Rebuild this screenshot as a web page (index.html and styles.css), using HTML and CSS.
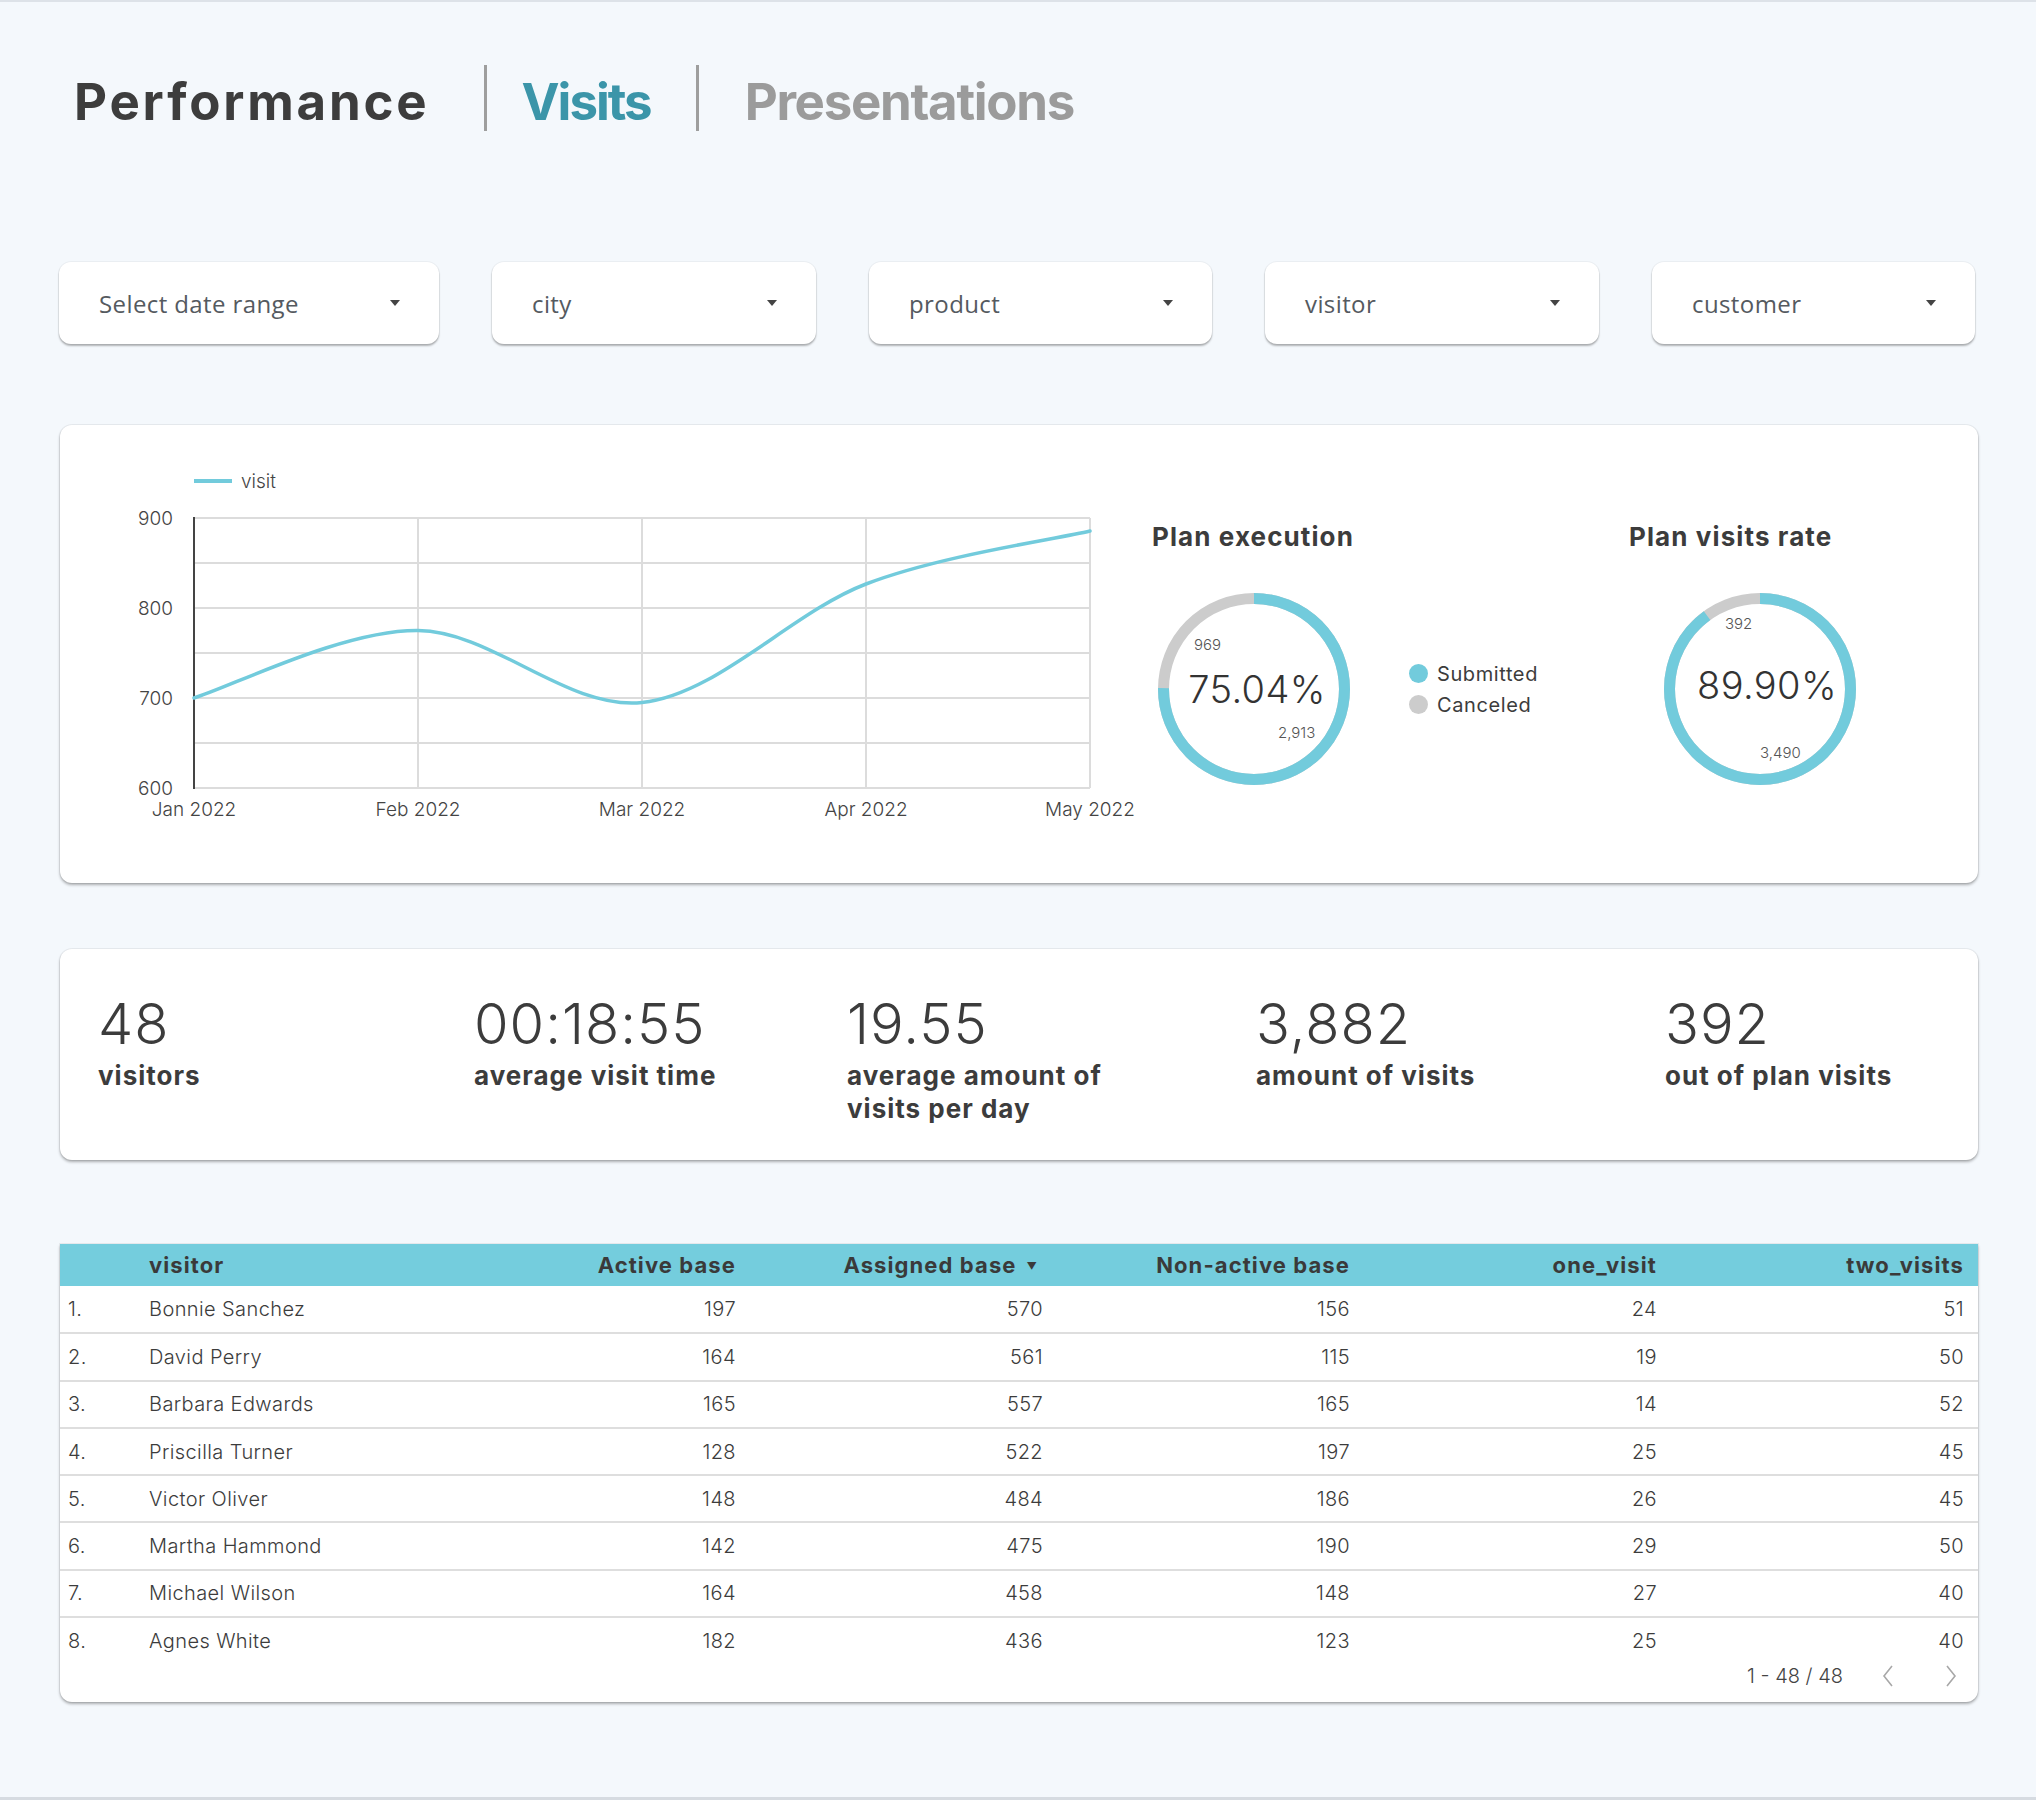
FILE: index.html
```html
<!DOCTYPE html>
<html lang="en">
<head>
<meta charset="utf-8">
<title>Performance – Visits</title>
<link rel="stylesheet" href="styles.css">
</head>
<body>
<div class="page">
  <header class="tabs">
    <h1 class="tab tab-main">Performance</h1>
    <span class="pipe pipe-1"></span>
    <span class="tab tab-active">Visits</span>
    <span class="pipe pipe-2"></span>
    <span class="tab tab-muted">Presentations</span>
  </header>

  <div class="filters">
    <div class="filter"><span>Select date range</span><i class="caret"></i></div>
    <div class="filter"><span>city</span><i class="caret"></i></div>
    <div class="filter"><span>product</span><i class="caret"></i></div>
    <div class="filter"><span>visitor</span><i class="caret"></i></div>
    <div class="filter"><span>customer</span><i class="caret"></i></div>
  </div>

  <section class="card chart-card">
    <svg class="line-chart" width="1080" height="420" viewBox="0 0 1080 420">
      <line x1="134" y1="56" x2="172" y2="56" class="legend-line"/>
      <text x="181" y="56" class="legend-text">visit</text>
      <g class="grid">
        <line x1="134" y1="93" x2="1030" y2="93"/>
        <line x1="134" y1="138" x2="1030" y2="138"/>
        <line x1="134" y1="183" x2="1030" y2="183"/>
        <line x1="134" y1="228" x2="1030" y2="228"/>
        <line x1="134" y1="273" x2="1030" y2="273"/>
        <line x1="134" y1="318" x2="1030" y2="318"/>
        <line x1="134" y1="363" x2="1030" y2="363"/>
        <line x1="358" y1="93" x2="358" y2="363"/>
        <line x1="582" y1="93" x2="582" y2="363"/>
        <line x1="806" y1="93" x2="806" y2="363"/>
        <line x1="1030" y1="93" x2="1030" y2="363"/>
      </g>
      <line x1="134" y1="92" x2="134" y2="364" class="axis"/>
      <g class="ylabels">
        <text x="113" y="93">900</text>
        <text x="113" y="183">800</text>
        <text x="113" y="273">700</text>
        <text x="113" y="363">600</text>
      </g>
      <g class="xlabels">
        <text x="134" y="384">Jan 2022</text>
        <text x="358" y="384">Feb 2022</text>
        <text x="582" y="384">Mar 2022</text>
        <text x="806" y="384">Apr 2022</text>
        <text x="1030" y="384">May 2022</text>
      </g>
      <path class="series" d="M134,273 C171.3,261.75 283.3,204.75 358,205.5 C432.7,206.25 507.3,285.25 582,277.5 C656.7,269.75 731.3,187.6 806,159 C880.7,130.4 992.7,114.8 1030,106"/>
    </svg>

    <div class="gauge gauge-exec">
      <h2 class="gauge-title">Plan execution</h2>
      <div class="gauge-row">
        <svg class="donut" width="204" height="204" viewBox="0 0 204 204">
          <circle cx="102" cy="102" r="90.5" class="ring-bg"/>
          <circle cx="102" cy="102" r="90.5" class="ring-fg" stroke-dasharray="426.7 568.6" transform="rotate(-90 102 102)"/>
          <text x="105" y="102" class="donut-value">75.04%</text>
          <text x="42" y="57" class="donut-label">969</text>
          <text x="126" y="145" class="donut-label">2,913</text>
        </svg>
        <ul class="legend">
          <li><span class="dot dot-teal"></span>Submitted</li>
          <li><span class="dot dot-gray"></span>Canceled</li>
        </ul>
      </div>
    </div>

    <div class="gauge gauge-rate">
      <h2 class="gauge-title">Plan visits rate</h2>
      <svg class="donut donut-rate" width="204" height="204" viewBox="0 0 204 204">
        <circle cx="102" cy="102" r="90.5" class="ring-bg"/>
        <circle cx="102" cy="102" r="90.5" class="ring-fg" stroke-dasharray="511.2 568.6" transform="rotate(-90 102 102)"/>
        <text x="109" y="98" class="donut-value">89.90%</text>
        <text x="67" y="36" class="donut-label">392</text>
        <text x="102" y="165" class="donut-label">3,490</text>
      </svg>
    </div>
  </section>

  <section class="card kpis">
    <div class="kpi kpi-1"><div class="kpi-value">48</div><div class="kpi-label">visitors</div></div>
    <div class="kpi kpi-2"><div class="kpi-value">00:18:55</div><div class="kpi-label">average visit time</div></div>
    <div class="kpi kpi-3"><div class="kpi-value">19.55</div><div class="kpi-label">average amount of<br>visits per day</div></div>
    <div class="kpi kpi-4"><div class="kpi-value">3,882</div><div class="kpi-label">amount of visits</div></div>
    <div class="kpi kpi-5"><div class="kpi-value">392</div><div class="kpi-label">out of plan visits</div></div>
  </section>

  <section class="card table-card">
    <table class="data">
      <colgroup>
        <col class="c-num"><col class="c-name"><col class="c-val"><col class="c-val"><col class="c-val"><col class="c-val"><col class="c-val">
      </colgroup>
      <thead>
        <tr>
          <th></th>
          <th class="left">visitor</th>
          <th>Active base</th>
          <th class="sorted">Assigned base<span class="sort">▼</span></th>
          <th>Non-active base</th>
          <th>one_visit</th>
          <th>two_visits</th>
        </tr>
      </thead>
      <tbody>
        <tr><td class="num">1.</td><td class="left">Bonnie Sanchez</td><td>197</td><td>570</td><td>156</td><td>24</td><td>51</td></tr>
        <tr><td class="num">2.</td><td class="left">David Perry</td><td>164</td><td>561</td><td>115</td><td>19</td><td>50</td></tr>
        <tr><td class="num">3.</td><td class="left">Barbara Edwards</td><td>165</td><td>557</td><td>165</td><td>14</td><td>52</td></tr>
        <tr><td class="num">4.</td><td class="left">Priscilla Turner</td><td>128</td><td>522</td><td>197</td><td>25</td><td>45</td></tr>
        <tr><td class="num">5.</td><td class="left">Victor Oliver</td><td>148</td><td>484</td><td>186</td><td>26</td><td>45</td></tr>
        <tr><td class="num">6.</td><td class="left">Martha Hammond</td><td>142</td><td>475</td><td>190</td><td>29</td><td>50</td></tr>
        <tr><td class="num">7.</td><td class="left">Michael Wilson</td><td>164</td><td>458</td><td>148</td><td>27</td><td>40</td></tr>
        <tr class="last"><td class="num">8.</td><td class="left">Agnes White</td><td>182</td><td>436</td><td>123</td><td>25</td><td>40</td></tr>
      </tbody>
    </table>
    <div class="pager">
      <span class="pager-text">1 - 48 / 48</span>
      <svg class="chev" width="14" height="24" viewBox="0 0 14 24"><polyline points="11,2 3,12 11,22"/></svg>
      <svg class="chev" width="14" height="24" viewBox="0 0 14 24"><polyline points="3,2 11,12 3,22"/></svg>
    </div>
  </section>
</div>
</body>
</html>
```

FILE: styles.css
```css
* { box-sizing: border-box; }

html, body {
  margin: 0;
  padding: 0;
}

body {
  width: 2036px;
  height: 1800px;
  background: #f4f8fc;
  border-top: 2px solid #dde2e8;
  border-bottom: 3px solid #d6dbe1;
  font-family: "Inter", "Noto Sans", sans-serif;
  color: #3c3c3c;
  overflow: hidden;
}

.page {
  padding: 69px 0 0 59px;
  width: 1977px;
  display: flex;
  flex-direction: column;
}

/* ---------- Tabs ---------- */
.tabs {
  display: flex;
  align-items: center;
  height: 62px;
  padding-left: 15px;
}
.tab {
  margin: 0;
  font-size: 51px;
  line-height: 62px;
  font-weight: 700;
}
.tab-main { color: #3d3d3d; letter-spacing: 2.8px; }
.tab-active { color: #3b95a9; letter-spacing: -2px; }
.tab-muted { color: #9b9b9b; letter-spacing: -1.3px; }
.pipe {
  width: 3px;
  height: 66px;
  background: #9e9e9e;
  margin-top: -8px;
}
.pipe-1 { margin-left: 55px; margin-right: 34px; }
.pipe-2 { margin-left: 45px; margin-right: 46px; }

/* ---------- Filters ---------- */
.filters {
  margin-top: 129px;
  display: grid;
  grid-template-columns: 380px 324px 343px 334px 323px;
  column-gap: 53px;
}
.filter {
  height: 82px;
  background: #fff;
  border-radius: 12px;
  box-shadow: 0 0 0 1px rgba(0, 0, 0, 0.04), 0 2px 2px rgba(0, 0, 0, 0.28);
  display: flex;
  align-items: center;
  justify-content: space-between;
  padding: 0 39px 0 40px;
  font-family: "Open Sans", "Noto Sans", sans-serif;
  font-size: 24px;
  letter-spacing: 0.4px;
  color: #555a5f;
}
.caret {
  width: 0;
  height: 0;
  border-left: 5px solid transparent;
  border-right: 5px solid transparent;
  border-top: 6px solid #444;
}

/* ---------- Cards ---------- */
.card {
  background: #fff;
  border-radius: 12px;
  box-shadow: 0 0 0 1px rgba(0, 0, 0, 0.05), 0 2px 3px rgba(0, 0, 0, 0.3);
}

.chart-card {
  margin-top: 81px;
  height: 458px;
  width: 1918px;
  margin-left: 1px;
  display: flex;
  align-items: flex-start;
}

.line-chart { display: block; flex: none; }
.line-chart text {
  font-family: "Inter", "Noto Sans", sans-serif;
  font-size: 19px;
  font-weight: 300;
  fill: #444;
}
.legend-line { stroke: #72cbdc; stroke-width: 4; }
.legend-text { dominant-baseline: central; }
.grid line { stroke: #dcdcdc; stroke-width: 2; }
.axis { stroke: #444; stroke-width: 2; }
.ylabels text { text-anchor: end; dominant-baseline: central; }
.xlabels text { text-anchor: middle; dominant-baseline: central; }
.series { fill: none; stroke: #72cbdc; stroke-width: 3.5; stroke-linecap: round; }

.gauge {
  padding-top: 97px;
  flex: none;
}
.gauge-exec { margin-left: 12px; width: 477px; }
.gauge-title {
  margin: 0;
  font-size: 26px;
  line-height: 30px;
  font-weight: 700;
  color: #3c3c3c;
  letter-spacing: 1.1px;
}
.gauge-row {
  margin-top: 35px;
  display: flex;
  align-items: center;
}
.donut { display: block; flex: none; }
.donut-rate { margin-top: 35px; margin-left: 29px; }
.ring-bg { fill: none; stroke: #cccccc; stroke-width: 11; }
.ring-fg { fill: none; stroke: #72cbdc; stroke-width: 11; }
.donut-value {
  font-family: "Inter", "Noto Sans", sans-serif;
  font-size: 38px;
  font-weight: 300;
  fill: #333;
  text-anchor: middle;
  dominant-baseline: central;
  letter-spacing: 0.4px;
}
.donut-label {
  font-family: "Inter", "Noto Sans", sans-serif;
  font-size: 15px;
  font-weight: 300;
  fill: #555;
  dominant-baseline: central;
}

.legend {
  list-style: none;
  margin: 0 0 0 53px;
  padding: 0;
  display: flex;
  flex-direction: column;
  gap: 9px;
}
.legend li {
  display: flex;
  align-items: center;
  font-size: 20px;
  line-height: 22px;
  letter-spacing: 0.6px;
  color: #3c3c3c;
}
.dot {
  width: 19px;
  height: 19px;
  border-radius: 50%;
  margin-right: 9px;
}
.dot-teal { background: #72cbdc; }
.dot-gray { background: #cccccc; }

/* ---------- KPIs ---------- */
.kpis {
  margin-top: 66px;
  height: 211px;
  width: 1918px;
  margin-left: 1px;
  display: grid;
  grid-template-columns: 376px 373px 409px 409px 1fr;
  padding: 45px 0 0 38px;
}
.kpi-value {
  font-size: 56px;
  line-height: 60px;
  font-weight: 300;
  color: #3c3c3c;
  letter-spacing: 1px;
}
.kpi-label {
  margin-top: 5px;
  font-size: 26px;
  line-height: 33px;
  font-weight: 700;
  color: #3c3c3c;
  letter-spacing: 1px;
}

/* ---------- Table ---------- */
.table-card {
  margin-top: 84px;
  width: 1918px;
  margin-left: 1px;
  height: 458px;
  overflow: hidden;
  border-radius: 0 0 12px 12px;
  display: flex;
  flex-direction: column;
}
.data {
  width: 100%;
  border-collapse: collapse;
  table-layout: fixed;
}
.c-num { width: 75px; }
.c-name { width: 308px; }
.c-val { width: 307px; }
.data thead tr {
  background: #74cddd;
  height: 42px;
}
.data th {
  font-size: 22px;
  font-weight: 700;
  color: #3a3a3a;
  text-align: right;
  padding: 0 14px;
  white-space: nowrap;
  letter-spacing: 1.1px;
}
.data th.sorted { padding-right: 20px; }
.data th.left, .data td.left { text-align: left; }
.sort {
  font-size: 10px;
  margin-left: 10px;
  vertical-align: 3px;
  letter-spacing: 0;
}
.data tbody tr {
  height: 47.3px;
  border-bottom: 2px solid #dedede;
}
.data tbody tr.last { border-bottom: 0; }
.data td {
  font-size: 20px;
  font-weight: 300;
  color: #3c3c3c;
  text-align: right;
  padding: 0 14px;
  letter-spacing: 0.4px;
}
.data td.num { text-align: left; padding-left: 8px; }

.pager {
  display: flex;
  justify-content: flex-end;
  align-items: center;
  padding-right: 20px;
  margin-top: -6px;
  height: 36px;
}
.pager-text {
  font-size: 20px;
  font-weight: 300;
  color: #444;
  margin-right: 38px;
}
.chev { display: block; }
.chev polyline { fill: none; stroke: #a8a8a8; stroke-width: 1.6; }
.chev + .chev { margin-left: 49px; }
```
